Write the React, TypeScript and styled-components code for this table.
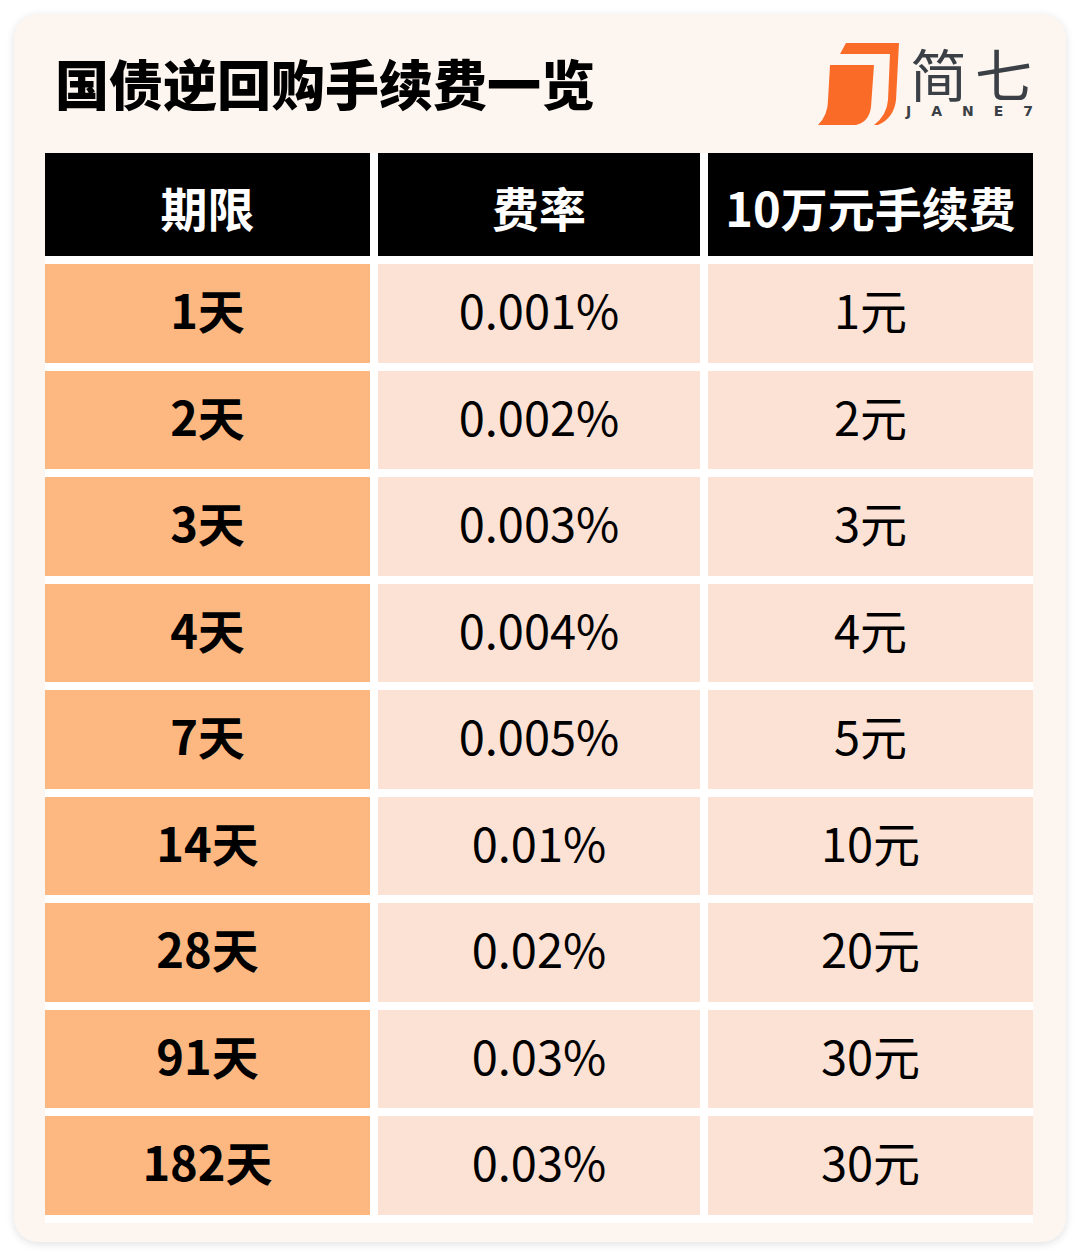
import React from "react";
import styled, { createGlobalStyle } from "styled-components";

const Global = createGlobalStyle`
  html, body { margin: 0; padding: 0; background: #ffffff; }
  body { font-family: "Noto Sans CJK SC", "Noto Sans", sans-serif; }
  * { box-sizing: border-box; }
`;

const Page = styled.div`
  width: 1080px;
  height: 1257px;
  padding: 14px;
  background: #ffffff;
`;

const Card = styled.div`
  width: 1052px;
  height: 1228px;
  border-radius: 24px;
  background: #fdf6f0;
  box-shadow: 0 2px 8px rgba(0, 0, 0, 0.12);
  padding: 21px 33px 0 31px;
  display: flex;
  flex-direction: column;
`;

const Header = styled.div`
  display: flex;
  justify-content: space-between;
  align-items: flex-start;
  height: 118px;
`;

const Title = styled.h1`
  margin: 21px 0 0 10px;
  font-family: "Noto Sans CJK SC", sans-serif;
  font-weight: 900;
  font-size: 54px;
  line-height: 54px;
  color: #000000;
  letter-spacing: 0;
`;

const Logo = styled.div`
  display: flex;
  align-items: flex-start;
`;

const LogoMark = styled.svg`
  width: 95px;
  height: 95px;
  display: block;
`;

const LogoText = styled.div`
  display: flex;
  flex-direction: column;
  align-items: flex-start;
  margin-top: 11px;
  margin-left: 2px;
`;

const LogoName = styled.div`
  font-family: "Noto Sans CJK SC", sans-serif;
  font-weight: 400;
  font-size: 57px;
  line-height: 52px;
  letter-spacing: 8px;
  color: #3a4046;
  margin-right: -8px;
`;

const LogoSub = styled.div`
  font-family: "DejaVu Sans", sans-serif;
  font-weight: 700;
  font-size: 14px;
  line-height: 14px;
  letter-spacing: 20px;
  color: #3a4046;
  margin-top: 6px;
  margin-left: -4px;
  margin-right: -20px;
`;

const Table = styled.div`
  display: grid;
  grid-template-columns: 325px 322px 325px;
  grid-template-rows: 103px repeat(9, 98.5px);
  gap: 8px;
  padding-bottom: 8px;
  background: #ffffff;
  width: 988px;
`;

type Kind = "head" | "period" | "value";

const Cell = styled.div<{ $kind: Kind }>`
  display: flex;
  align-items: center;
  justify-content: center;
  font-family: "Noto Sans CJK SC", sans-serif;
  font-size: 47px;
  font-weight: ${(p) => (p.$kind === "value" ? 400 : 700)};
  color: ${(p) => (p.$kind === "head" ? "#ffffff" : "#000000")};
  background: ${(p) =>
    p.$kind === "head" ? "#000000" : p.$kind === "period" ? "#fdb882" : "#fce2d5"};
  padding-top: ${(p) => (p.$kind === "head" ? "4px" : "0")};
  padding-bottom: ${(p) => (p.$kind === "head" ? "0" : "9px")};
  line-height: 1;
`;

const rows: [string, string, string][] = [
  ["1天", "0.001%", "1元"],
  ["2天", "0.002%", "2元"],
  ["3天", "0.003%", "3元"],
  ["4天", "0.004%", "4元"],
  ["7天", "0.005%", "5元"],
  ["14天", "0.01%", "10元"],
  ["28天", "0.02%", "20元"],
  ["91天", "0.03%", "30元"],
  ["182天", "0.03%", "30元"],
];

export default function App() {
  return (
    <>
      <Global />
      <Page>
        <Card>
          <Header>
            <Title>国债逆回购手续费一览</Title>
            <Logo>
              <LogoMark viewBox="0 0 95 95">
                <path
                  d="M33 8 L86 8 L83 65 Q81 83 65 90 L61 90 Q74 80 75 65 L77 19 L27 19 Z"
                  fill="#fa6b28"
                />
                <path
                  d="M17 30 L61 30 L58 72 Q56 87 43 90 L5 90 Q15 80 15 65 Z"
                  fill="#fa6b28"
                />
              </LogoMark>
              <LogoText>
                <LogoName>简七</LogoName>
                <LogoSub>JANE7</LogoSub>
              </LogoText>
            </Logo>
          </Header>
          <Table>
            <Cell $kind="head">期限</Cell>
            <Cell $kind="head">费率</Cell>
            <Cell $kind="head">10万元手续费</Cell>
            {rows.map(([a, b, c]) => (
              <React.Fragment key={a}>
                <Cell $kind="period">{a}</Cell>
                <Cell $kind="value">{b}</Cell>
                <Cell $kind="value">{c}</Cell>
              </React.Fragment>
            ))}
          </Table>
        </Card>
      </Page>
    </>
  );
}
